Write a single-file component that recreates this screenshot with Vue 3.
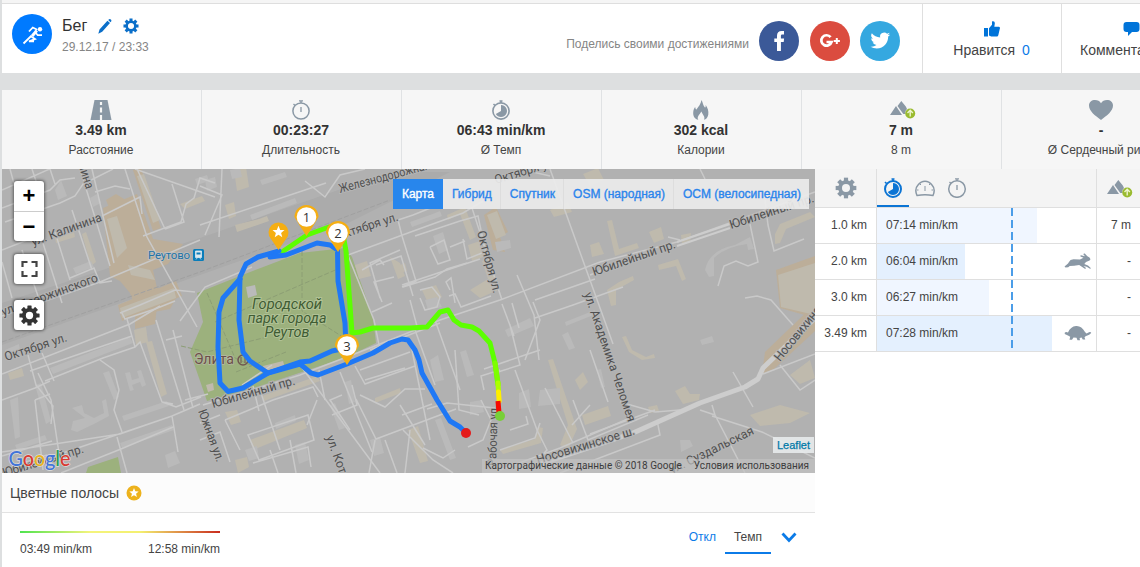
<template>
  <div class="page">
    <header class="top">
      <div class="sport">
        <svg viewBox="0 0 40 40" width="40" height="40">
          <circle cx="20" cy="20" r="20" fill="#007aff" />
          <circle cx="28" cy="15.200" r="2.200" fill="#fff" />
          <g fill="none" stroke="#fff" stroke-width="1.800">
            <path d="M17 17.500l3.800-4 4.500 2.200M23.500 18.500l2.200 2.700h4.300M11.500 29.500l8.200-8M18.800 22.300l4.200 2.700-6 2.300h5" />
            <path d="M24.800 16.500l-4.600 5.500" stroke-width="3" />
          </g>
        </svg>
      </div>
      <div class="title">
        <div class="name">
          <span>Бег</span>
          <svg class="pencil" viewBox="0 0 14 15" width="14" height="15" fill="#0b6fc9">
            <path d="M0.3 14.700l1.200-4.200 7.900-8.800 2.600 2.200-7.800 8.900zM10.200 1l.6-.6q1-.7 2.100.2.900 1 .2 2l-.6.6z" />
          </svg>
          <svg viewBox="-10 -10 20 20" width="16" height="16" fill="#0b6fc9">
            <g><rect v-for="a in gearAngles" :key="a" x="-1.9" y="-9.4" width="3.8" height="5" :transform="`rotate(${a})`" /></g>
            <circle r="5.4" fill="none" stroke="#0b6fc9" stroke-width="3.2" />
          </svg>
        </div>
        <div class="date">29.12.17 / 23:33</div>
      </div>
      <div class="share">
        <span>Поделись своими достижениями</span>
        <svg viewBox="0 0 40 40" width="40" height="40">
          <circle cx="20" cy="20" r="20" fill="#3b5998" />
          <path d="M18 30V21h-2.700v-3.600H18v-2.600c0-3.200 1.600-4.800 4.700-4.800H25v3.600h-1.600c-1.200 0-1.500.6-1.500 1.600v2.200h3.200l-.4 3.600h-2.800v9z" fill="#fff" />
        </svg>
        <svg class="gplus" viewBox="0 0 40 40" width="40" height="40">
          <circle cx="20" cy="20" r="20" fill="#db4c3f" />
          <path d="M20.600 16.200a5.200 5.200 0 1 0 .9 4.800h-5" fill="none" stroke="#fff" stroke-width="2.700" />
          <path d="M26.800 16.900v6.200M23.700 20h6.200" stroke="#fff" stroke-width="2" />
        </svg>
        <svg viewBox="0 0 40 40" width="40" height="40">
          <circle cx="20" cy="20" r="20" fill="#35a8e0" />
          <path transform="translate(10.5 9.7) scale(.82)" d="M23.95 4.57a10 10 0 0 1-2.82.77 4.96 4.96 0 0 0 2.16-2.72 9.9 9.9 0 0 1-3.12 1.19 4.92 4.92 0 0 0-8.38 4.48A13.93 13.93 0 0 1 1.64 3.16a4.92 4.92 0 0 0 1.52 6.57 4.9 4.9 0 0 1-2.22-.61v.06a4.92 4.92 0 0 0 3.94 4.83 5 5 0 0 1-2.21.08 4.94 4.94 0 0 0 4.6 3.42A9.87 9.87 0 0 1 0 19.54a13.99 13.99 0 0 0 7.55 2.21c9.05 0 14-7.5 14-13.99l-.02-.63a10 10 0 0 0 2.42-2.56z" fill="#fff" />
        </svg>
      </div>
      <div class="action like">
        <svg viewBox="0 0 16 16" width="16" height="16" fill="#0074d9">
          <path d="M0 7h4v8.5H0zM5 7.2l3-3.5V.6c1.8-.9 3 .4 2.8 2.2l-.5 3H15c1 .2 1.2 1.2.8 2l-1.5 6.5c-.3.9-.8 1.2-1.6 1.2H7.200L5 14.500z" />
        </svg>
        <div>Нравится <b>0</b></div>
      </div>
      <div class="action comment">
        <svg viewBox="0 0 17 16" width="17" height="16" fill="#0074d9">
          <path d="M3.500 1h10Q16.500 1 16.500 4v4q0 3-3 3H9l-4 4v-4H3.500Q.5 11 .5 8V4q0-3 3-3z" />
        </svg>
        <div>Комментарии</div>
      </div>
    </header>

    <section class="stats">
      <div v-for="s in stats" :key="s.label" class="stat">
        <svg v-if="s.icon === 'road'" class="icon" viewBox="0 0 22 20" width="22" height="20">
          <path d="M4.500 0h13L21.500 20H.5z" fill="#8a98a5" />
          <path d="M11 2v3M11 7.500v5M11 15v5" stroke="#f6f6f6" stroke-width="2.200" />
        </svg>
        <svg v-else-if="s.icon === 'clock'" class="icon" viewBox="0 0 20 20" width="20" height="20" fill="none" stroke="#8a98a5">
          <circle cx="10" cy="11" r="8.100" stroke-width="1.500" />
          <path d="M10 7v5M8 .9h4M10 1v2M2.500 4l1.500 1.500" stroke-width="1.300" />
        </svg>
        <svg v-else-if="s.icon === 'pace'" class="icon" viewBox="0 0 20 20" width="20" height="20">
          <circle cx="10" cy="11" r="8.100" fill="none" stroke="#8a98a5" stroke-width="1.600" />
          <path d="M10 11V5a6 6 0 1 1-5.200 9z" fill="#8a98a5" />
          <path d="M8.500 1h3M10 1v2M2.500 4l1.500 1.500" stroke="#8a98a5" stroke-width="1.500" />
        </svg>
        <svg v-else-if="s.icon === 'fire'" class="icon" viewBox="0 0 16 20" width="16" height="20">
          <path d="M8.500 0c1.500 3 1.400 5 3.400 7.500q1 .5.800-2.500c2 3 3.100 6 2.600 9.500-.5 3-2.300 5-4.300 5.300 1.500-3.300-1.500-5-2.500-8.300-2 3-5 5.500-3.200 8.300C2 19.200 0 16.500.2 12.800.3 10 1.200 8 2.200 7c.2 1.500.5 2.500 1.300 2.500C5.500 6.500 7.800 4 8.500 0z" fill="#8a98a5" />
        </svg>
        <svg v-else-if="s.icon === 'climb'" class="icon climb" viewBox="0 0 26 18" width="26" height="18">
          <path d="M0 14l6-9 6 9zM7.500 5l3.800-5 4.500 5.500L17 8q-2 1.500-1.700 5h-2z" fill="#8a98a5" />
          <circle cx="20.200" cy="12.500" r="5" fill="#9abb30" />
          <path d="M20.200 15.500v-6M17.500 12l2.700-2.700 2.700 2.700" fill="none" stroke="#eef5d0" stroke-width="1.400" />
        </svg>
        <svg v-else class="icon" viewBox="0 0 24 20" width="24" height="20">
          <path d="M12 20C6 15.500 0 11 0 5.500 0 2 2.800 0 6 0q4 0 6 3.300Q14 0 18 0c3.300 0 6 2 6 5.500C24 11 18 15.500 12 20z" fill="#8a98a5" />
        </svg>
        <strong>{{ s.value }}</strong>
        <span>{{ s.label }}</span>
      </div>
    </section>

    <main class="content">
      <div class="left">
        <div class="map">
          <svg class="tiles" viewBox="2 169 813 304" width="813" height="304">
            <rect x="2" y="169" width="813" height="304" fill="#b1b1b1" />
            <path d="M2 303L200 238 390 172h60L350 222 200 275 2 345z" fill="#ababab" />
            <g fill="#bcae99">
              <path v-for="d in sand" :key="d" :d="d" />
            </g>
            <path d="M197 293L245 274 300 253 345 248 352 257 373 318 376 343 347 357 260 386 207 401 190 352 203 322z" fill="#9cb17d" />
            <path d="M88 467l30-10 3 16H86z" fill="#9cb17d" />
            <g fill="#bfbaad">
              <path v-for="d in buildings" :key="d" :d="d" />
            </g>
            <g fill="#bababa">
              <path v-for="d in blocks" :key="d" :d="d" />
            </g>
            <g fill="none" stroke="#c9c9c9" stroke-width="1.500">
              <path v-for="d in roads" :key="d" :d="d" />
            </g>
            <g fill="none" stroke="#cdcdcd">
              <path d="M540 464L633 433 700 403 745 387 758 379 763 368 815 318" stroke-width="5" stroke-linejoin="round" />
              <path d="M677 246L730 228M677 242L730 224" stroke-width="2" />
            </g>
            <g fill="none" stroke="#999" stroke-width="1" stroke-dasharray="5 2">
              <path d="M2 342L200 272 390 200" stroke="#a0a0a0" />
              <path d="M207 293l28 65 35 16M302 251v60l55 35M215 322L340 268M236 372l50-20M181 346l26 6 60-15" stroke="#8c9e74" />
            </g>

            <g class="streets">
              <text v-for="l in labels" :key="l.t + l.x" :textLength="l.w" lengthAdjust="spacingAndGlyphs" :transform="`translate(${l.x} ${l.y}) rotate(${l.r})`">{{ l.t }}</text>
            </g>
            <g class="park" text-anchor="middle">
              <text x="287" y="309" textLength="70" lengthAdjust="spacingAndGlyphs">Городской</text>
              <text x="287" y="323" textLength="79" lengthAdjust="spacingAndGlyphs">парк города</text>
              <text x="287" y="337" textLength="45" lengthAdjust="spacingAndGlyphs">Реутов</text>
            </g>
            <text class="place" x="194" y="364" textLength="40" lengthAdjust="spacingAndGlyphs">Элита</text>
            <circle cx="243" cy="360" r="5" fill="none" stroke="#715850" stroke-width="1.500" />
            <path d="M241 357v6M245 357v6" stroke="#715850" />
            <text class="station" x="148" y="259" textLength="42">Реутово</text>
            <rect x="193" y="249" width="11" height="12" rx="1.500" fill="#0a7dba" />
            <path d="M195.500 251h6v6.500h-6zM196 259.500l1.500-2M201 259.500l-1.500-2" fill="#dbe8ef" stroke="#dbe8ef" stroke-width=".8" />
            <path d="M196.500 252.500h4v2h-4z" fill="#0a7dba" />

            <g fill="none" stroke-width="5" stroke-linejoin="round" stroke-linecap="round">
              <path d="M282 252L307 235 329 227 340 229 344 240 346 251 352 333 360 332 373 328 410 328 427 327 440 312 448 310 454 320 461 325 472 327 479 331 490 343 495 363 498 385" stroke="#5cff00" />
              <path d="M495 363L498 383" stroke="#7dff00" />
              <path d="M498 383l.5 8" stroke="#adff00" />
              <path d="M498.500 392l.7 9" stroke="#ffee00" />
              <path d="M498 401l1 12" stroke="#f50a00" stroke-linecap="butt" />
              <g stroke="#1f78f5">
                <path d="M279 251L258 257 246 264 240 277 239 320 243 352 250 361 268 373 300 364 311 373 318 375 347 364 373 353 390 343 402 339 408 340 415 350 419 360 422 373 437 400 450 421 460 427 466 433" />
                <path d="M240 279L223 298 219 312 218 347 220 383 228 391.500 243 388 268 373 300 362 310 361 332 351 346 348 345 323 338 281 337.500 250 330 245 317 243 286 255 270 257" />
              </g>
            </g>
            <circle cx="500" cy="416" r="5" fill="#78cf38" />
            <circle cx="466" cy="433" r="5" fill="#e41b1b" />

            <g v-for="p in pins" :key="p.n" :transform="`translate(${p.x} ${p.y})`">
              <path d="M0 19L-6 10-12 0A12 12 0 1 1 12 0L6 10z" fill="#f5ae12" />
              <circle r="9.800" fill="#fff" />
              <text class="num" y="4.500" text-anchor="middle">{{ p.n }}</text>
            </g>
            <g transform="translate(278.500 232)">
              <path d="M0 18L-7.500 7A10 10 0 1 1 7.500 7z" fill="#f5ae12" />
              <path :d="star" fill="#fff" />
            </g>

            <text class="google" x="8.500" y="466" textLength="62" lengthAdjust="spacingAndGlyphs"><tspan fill="#4274d8">G</tspan><tspan fill="#d93a31">o</tspan><tspan fill="#e9b31d">o</tspan><tspan fill="#4274d8">g</tspan><tspan fill="#2c9c52">l</tspan><tspan fill="#d93a31">e</tspan></text>
          </svg>

          <div class="controls">
            <div class="box zoom"><i>+</i><i>−</i></div>
            <div class="box">
              <svg viewBox="0 0 16 16" width="17" height="16" fill="none" stroke="#444" stroke-width="2.200">
                <path d="M1 6V1h5M10 1h5v5M15 10v5h-5M6 15H1v-5" />
              </svg>
            </div>
            <div class="box">
              <svg viewBox="-10 -10 20 20" width="21" height="21" fill="#333">
                <rect v-for="a in gearAngles" :key="a" x="-2" y="-9.600" width="4" height="5" rx=".6" :transform="`rotate(${a})`" />
                <circle r="5.300" fill="none" stroke="#333" stroke-width="3.600" />
              </svg>
            </div>
          </div>
          <div class="layers">
            <button v-for="(l, i) in layers" :key="l" type="button" :class="{ active: i === 0 }">{{ l }}</button>
          </div>
          <div class="leaflet">Leaflet</div>
          <div class="credits"><span>Картографические данные © 2018 Google</span><span>Условия использования</span></div>
        </div>

        <div class="stripes">
          <span>Цветные полосы</span>
          <svg viewBox="-8 -8 16 16" width="16" height="16">
            <circle r="7.500" fill="#edb21c" />
            <path :d="star" transform="scale(.78)" fill="#fff" />
          </svg>
        </div>
        <div class="legend">
          <div class="scale">
            <div class="gradient"></div>
            <div class="range"><span>03:49 min/km</span><span>12:58 min/km</span></div>
          </div>
          <div class="modes">
            <a>Откл</a>
            <a class="on">Темп</a>
            <svg viewBox="0 0 16 11" width="16" height="11" fill="none" stroke="#0b7be8" stroke-width="2.800">
              <path d="M1.500 1.500L8 8.500l6.500-7" />
            </svg>
          </div>
        </div>
      </div>

      <div class="splits">
        <div class="row head">
          <div class="km">
            <svg viewBox="-10 -10 20 20" width="22" height="22" fill="#8a98a5">
              <rect v-for="a in gearAngles" :key="a" x="-1.900" y="-9.400" width="3.800" height="5" :transform="`rotate(${a})`" />
              <circle r="5.400" fill="none" stroke="#8a98a5" stroke-width="3.500" />
            </svg>
          </div>
          <div class="tabs">
            <div class="tab on">
              <svg viewBox="0 0 20 20" width="20" height="20">
                <circle cx="10" cy="11" r="8" fill="none" stroke="#0b74d4" stroke-width="2" />
                <path d="M10 11V5a6 6 0 1 1-5.200 9z" fill="#0b74d4" />
                <path d="M8.500 1h3M10 1v2M2 4l1.500 1.500" stroke="#0b74d4" stroke-width="1.600" />
              </svg>
            </div>
            <div class="tab">
              <svg viewBox="0 0 20 20" width="20" height="20" fill="none" stroke="#8a98a5">
                <path d="M2 17.500Q-.8 11 3 7q3-3.700 7-3.700T17 7q3.800 4 1 10.500-8-1.500-16 0z" stroke-width="1.500" />
                <path d="M10 8v5M5 6l1 1M15 6l-1 1M2 12h1.500M16.500 12H18" />
              </svg>
            </div>
            <div class="tab">
              <svg viewBox="0 0 20 20" width="20" height="20" fill="none" stroke="#8a98a5">
                <circle cx="10" cy="11" r="8.300" stroke-width="1.500" />
                <path d="M10 7v5M8 .9h4M10 1v2M2.500 4l1.500 1.500" stroke-width="1.300" />
              </svg>
            </div>
          </div>
          <div class="climb-col">
            <svg viewBox="0 0 26 18" width="26" height="18">
              <path d="M0 14l6-9 6 9zM7.500 5l3.800-5 4.500 5.500L17 8q-2 1.500-1.700 5h-2z" fill="#8a98a5" />
              <circle cx="20.200" cy="12.500" r="5" fill="#9abb30" />
              <path d="M20.200 15.500v-6M17.500 12l2.700-2.700 2.700 2.700" fill="none" stroke="#eef5d0" stroke-width="1.400" />
            </svg>
          </div>
        </div>
        <div v-for="s in splits" :key="s.km" class="row">
          <div class="km">{{ s.km }}</div>
          <div class="pace">
            <div class="bar" :class="{ strong: s.animal }" :style="{ width: s.width + 'px' }">{{ s.pace }}</div>
            <span class="avg"></span>
            <svg v-if="s.animal === 'hare'" class="animal" viewBox="0 0 28 16" width="28" height="16" fill="#8a98a5">
              <path d="M.5 13.500L4 10.500l.8-1.300Q6 6.500 9.500 6.300l6.500.2 3.500-1.800-3-1.200q-.5-1 .5-1.200l4 .9-1.700-2q.4-1 1.500-.6l2.600 2.700 2.100 1.200 1 1.800-.9 1.300-3.600 1.400-1.700 2 3.700 1.500 3 2.700-1 .6-3.300-2-3.200-.8 2.500 2-.8 1-6-4-5 .8-4.500.2-1.500 1.200-2.700.3z" />
            </svg>
            <svg v-else-if="s.animal" class="animal" viewBox="0 0 28 16" width="28" height="16" fill="#8a98a5">
              <path d="M.7 9q-.5-2 1.500-2L4 7.500Q6.500 1.500 12 1t9 6l1.500 1.500 3-1.500q2 0 1.700 1l-2 1.800-3.700 1.500-1 1.200.8 2h-2.500l-1.200-2-2 .4.400 2.400H13.500l-1-2.500-3-.2-1.500 2.200H5.500l.7-3L4 10.500z" />
            </svg>
          </div>
          <div class="climb-col">{{ s.climb }}</div>
        </div>
      </div>
    </main>
  </div>
</template>

<script setup>
const gearAngles = [0, 45, 90, 135, 180, 225, 270, 315]
const star = 'M0-6.300L1.700-2.100 6-1.900 2.600.9 3.800 5.200 0 2.800-3.800 5.200-2.600.9-6-1.900-1.700-2.100z'

const stats = [
  { icon: 'road', value: '3.49 km', label: 'Расстояние' },
  { icon: 'clock', value: '00:23:27', label: 'Длительность' },
  { icon: 'pace', value: '06:43 min/km', label: 'Ø Темп' },
  { icon: 'fire', value: '302 kcal', label: 'Калории' },
  { icon: 'climb', value: '7 m', label: '8 m' },
  { icon: 'heart', value: '-', label: 'Ø Сердечный ритм' },
]

const layers = ['Карта', 'Гибрид', 'Спутник', 'OSM (народная)', 'OCM (велосипедная)']

const splits = [
  { km: '1.0 km', pace: '07:14 min/km', width: 160, climb: '7 m' },
  { km: '2.0 km', pace: '06:04 min/km', width: 88, climb: '-', animal: 'hare' },
  { km: '3.0 km', pace: '06:27 min/km', width: 112, climb: '-' },
  { km: '3.49 km', pace: '07:28 min/km', width: 175, climb: '-', animal: 'turtle' },
]

const pins = [
  { n: 1, x: 306.5, y: 217 },
  { n: 2, x: 338, y: 233 },
  { n: 3, x: 347, y: 346 },
]

const labels = [
  { t: 'Железнодорожная', x: 340, y: 193, r: -15, w: 94 },
  { t: 'Октября ул.', x: 496, y: 184, r: -17, w: 64 },
  { t: 'Октября ул.', x: 338, y: 240, r: -18, w: 64 },
  { t: 'ул. Калинина', x: 33, y: 246, r: -20, w: 74 },
  { t: 'ул. Дзержинского', x: 3, y: 316, r: -20, w: 102 },
  { t: 'Калинина', x: 70, y: 140, r: 72, w: 52 },
  { t: 'Октября ул.', x: 6, y: 361, r: -18, w: 65 },
  { t: 'Октября ул.', x: 477, y: 232, r: 75, w: 64 },
  { t: 'Юбилейный пр.', x: 594, y: 276, r: -19, w: 87 },
  { t: 'Юбилейный пр.', x: 731, y: 229, r: -18, w: 88 },
  { t: 'ул. Академика Челомея', x: 584, y: 294, r: 71, w: 136 },
  { t: 'Носовихинское ш.', x: 538, y: 464, r: -17, w: 102 },
  { t: 'Носовихинское ш.', x: 780, y: 362, r: -51, w: 100 },
  { t: 'ул. Суздальская', x: 672, y: 474, r: -26, w: 92 },
  { t: 'Рабочая ул', x: 496, y: 466, r: -88, w: 58 },
  { t: 'ул. Котовского', x: 326, y: 437, r: 70, w: 86 },
  { t: 'Южная ул.', x: 198, y: 411, r: 70, w: 55 },
  { t: 'Юбилейный пр.', x: 213, y: 408, r: -16, w: 86 },
  { t: 'Юбилейный пр.', x: 4, y: 477, r: -17, w: 84 },
]

const roads = [
  'M2 208L50 190 60 180 75 178M2 190L70 160M10 169l6 22M32 169l6 18M50 169l5 15',
  'M2 250L40 235M5 222l55-19 15-7 8-12 30-15M72 210l20 60M55 232l15 48M80 169l30 97M92 169l22 94M95 192l20-6 15 3',
  'M102 216L140 197 142 214M125 169l22 68 50 90M137 169l28 60M135 169l80 28M165 229l19-7-12-38M143 236l38-14 5-18 8-6 6-20 15 5',
  'M2 316L100 282 200 240M70 278l24-10 6 15 12-2M42 240l20 63M2 262l10 36M22 250l16 46',
  'M120 313l20-8 35-15 20 2M122 313l3 6 30-10 20-8M180 321l25-34 47-20',
  'M200 186L222 195 205 235M222 169l-3 68M305 181l20 16 15-22 25-6M200 225l60-20 66-22',
  'M2 374L130 324 160 306M30 371L132 336M2 400l33-12 15-7M28 355l8 30 17 21-2 18M42 353l12 28M38 373l13 27 9 60M35 400l15-6',
  'M45 381l58-23 32-11 5-5 22 60 14 5 25-10M135 347l-8-28M156 320l28 90M173 330l20 78M166 340l16-4M185 400l23-6M162 402l11 2',
  'M100 360l14 10 5 20-5 20 8 22M2 452L120 434 172 416 200 404M35 400l8 70M60 454l112-38 6 36M117 437l10 36M61 473l60-24 52-22M2 456l50-15M2 470l45-15',
  'M203 405L300 375 370 348 440 320 500 300 600 262 677 242 815 192',
  'M345 248L374 320 380 350M348 255l60-22 55-20 20-12M400 250l-30 13 10 35M362 270l18-10 4 5M376 265l25-9 12 40M372 312l20-9M382 302l-8-20 20-5',
  'M402 236l14 45-14 6M415 236l45-15 18-5 8 38M402 236l-4-16 15-5 25-10M430 247l14-7 6 20-12 4-8-17M450 247l15-6M463 239l4 20 15-6M467 263l-20 6-12 8-32 10',
  'M402 285L480 259M449 296l6-2 6 13 30-11M410 300l8 30M450 290l-4-8 5-4 4 25M420 290l12-3 8 10-3 10-12 3-5-12',
  'M550 169l45 125 18 50M590 275l60-23M472 208l30 92M517 275l17 40 5 45M410 340l20 100M525 360l15-40-7-18',
  'M484 369l41-14 15-5M500 370l-19 6 3 14M515 370l22 60 10 20-5 5M495 408l-48-5-20 6M535 318l38-13 50-18M573 400l15 40 60-25M590 434l65-24',
  'M300 365L380 473M317 400l-10 25M253 386l6 25M225 420l48-20 40-13 5 10M220 415l-20 8M240 450l-15-30M272 365l-30 20',
  'M248 435l60-20 6 25-55 20zM200 440l20-8 10 30M253 463l55-16 3 20M290 440l6 33M270 450l8 23M325 400l-6-30M332 415l25-10-5-20M356 399l20 40 80-30M360 395l25 12 20-18 20 0',
  'M370 350l70-27M360 370l50-18M365 380l40-12M375 440l-6 33M385 440l12 33M402 415l30-11M403 430l30 30 20 13M400 405l25 40M410 430l-5 43',
  'M455 450l-12 8-20-10M468 447l15-7 8-20-10-20M455 350l4 60 20 5M510 430l18-6-2-8M500 450l35-12 5-15',
  'M500 470l60-22 70-30M560 473l100-38-3-15M590 405l-18 20M620 402l35 10 25-2M733 372l20 35M763 374l52-20M780 365l20 25 15-10',
  'M700 410l15 5-3-10M712 416l50 16 53 26M715 415l30 58M765 200l3 25 6 26 30-12M750 224l8 38-10 4-12-5-12 5-6 20M745 298l12-2 14 4 22 25M680 240l-12-3M700 169l5 10',
  'M240 400l20-10 20 60M340 372l12 30 20 50M355 366l10 18 50-18M350 430l-20-30 12-5M545 388l28 55M520 169l30 7',
  'M415 330l20 55M435 320l25 70M510 325l10 40-22 7M502 304l12 32M512 303l7 25M535 300l60-21M590 350l18 52',
]

const sand = [
  'M103 208l34-14 16 45 30 5-15 20-15 6 4 18 23 3-10 18-32 6-8-22-10-12-10-5z',
  'M133 170l8-2 20 60-8 3z',
  'M118 305l58-24 6 15-60 25z',
  'M135 312l22-6-2 18-20 5z',
  'M484 215l12-8 12 25-8 5 5 15-12-2z',
  'M765 352l50-48v27l-41 38-12 5z',
  'M776 270l39-14v62l-35-10z',
  'M106 200l10-6 8 5 6 6-20 5z',
]

const buildings = [
  'M107 219l10-3 10 32-10 10-5-20z',
  'M137 176l7-2 16 46-7 3z',
  'M120 308l54-20 2 10-54 20z',
  'M134 330l12-3 2 15-12 3z',
  'M146 342l6-1 15 53-6 3z',
  'M128 265l22 5 5 10-24-5z',
  'M180 204l22-8 3 5-20 8zM55 238l19-6 1 5-19 6zM86 232l10 30-5 4-9-32z',
  'M8 373l14-5 2 8-14 4z',
  'M234 170l12-3 3 20-12 4zM235 225l24-6 8-3 2 5-32 11zM225 205l9-3 2 14-7 3z',
  'M355 265l12-4 4 15-12 3zM390 257l10 6 5 13-7 3z',
  'M447 215l18-8 11 30-6 3-10-26-12 6zM487 215l10-4 9 24-10 4zM468 245l12-4 6 15-14 5z',
  'M422 290l14-5 6 12-14 6zM470 290l18-11-6-18 7-2 11 30-20 9zM400 265l5-2 2 8-7 2z',
  'M583 174l15-6 6 12-14 6zM590 245l9-3 5 12-12 3zM550 210l18-8 4 10-18 5z',
  'M607 221l5-1 7 29 18-6 2 5-24 8zM649 232l12-5 3 12-10 4zM658 265l20-6 8 20-4 2-6-15-17 4z',
  'M607 290l12-8 14-6 1 4-18 10 0 15-5 1z',
  'M775 234l5-10 30-12 5 5-29 12-6 14-5 1z',
  'M778 275l37-12v52l-34-8z',
  'M690 243l-8 0-1-8 10-2z',
  'M560 445l8-20-20-65 5-1 24 70-9 20zM575 380l8-8 5 10-8 8z',
  'M582 415l26-9 3 10-26 9zM675 391l10-5 5 8 10 0-1 6-16 4zM648 407l9-2 2 6-9 2z',
  'M622 337l4-1 6 14 14 7 8-3 1 4-13 2-13-8z',
  'M250 440l54-20 3 8-54 22zM262 396l55-20 3 5-56 20zM235 460l12-3 2 10-11 6z',
  'M263 366l20-5 2 7-20 7zM206 385l7-2 1 7-6 2zM375 398l25-10 1 5-26 10zM225 412l12-2 4 12-10 3zM408 430l10-4 10 35-8 2z',
  'M750 415l30-10 30 8-20 10-30 3zM790 375l20-15 5 18-15 6zM500 450l35-11 3-12 5 1-2 15-38 11z',
]

const blocks = [
  'M20 190l14-4 2 8-14 4zM55 190l6-10 6 16-9 4zM90 198l7-4 4 9-8 4zM195 179l12-4 2 6-12 4zM73 268l18-7 3 6-18 7z',
  'M5 350l14-6 1 7-14 5zM50 368l80-31 3 6-80 31zM35 385l6-2 10 38-5 3zM10 400l8-3 2 40-5 2zM122 416l45-15 2 5-45 15z',
  'M103 373l6-2 10 26-5 3zM125 373l5-1 2 8 7-2-2-7 4-1 5 15-4 2-2-5-8 3 2 5-4 1zM72 408l10-3 2 8 10 5 10-5-2-12 4-2 3 17-15 8-17 8-6-2 2-9 12-3z',
  'M165 455l10-4 5 12-12 5zM120 443l52-18 2 5-52 18zM15 445l30-10 2 5-30 10z',
  'M410 222l20-7 10-4 2 5-30 11zM433 236l10-4 5 18-9 4zM495 242l15-2 1 8-14 4zM425 300l12-3 5 10-14 3z',
  'M705 270q4-20 30-25l15-8 4 12-6 1-1-6q-22 3-33 14l0 18-5 1z',
  'M430 360l8-5 6 25-9 2zM460 352l6-2 8 25-7 2zM470 402l12-2 2 12-14 3zM519 393l10-4 2 18-12 2zM540 390l20-2v16l-22 2z',
  'M230 170l10-2 2 9-10 2zM205 180l10-3 2 10-10 4zM260 180l25-8 2 5-25 8zM250 215l45-17 2 5-45 17z',
  'M345 382l6-2 4 22-6 2zM330 405l5-2 10 25-6 2zM275 423l20-8 1 6-20 8zM295 445l10-3 4 18-10 4zM245 450l12-4 2 12-10 3z',
  'M370 440l10-3 4 16-10 3zM435 420l6-2 15 40-6 2zM597 370l4-1 4 18-4 1zM562 335l6-3 7 16-6 2zM565 322l30-12 1 4-30 12z',
  'M505 330l25-12 4 8-26 11zM680 440l10 0 3 6-12 6zM700 340l12-4 2 6-12 3zM246 287l9-2 2 10-9 3z',
]
</script>

<style>
body {
  margin: 0;
  overflow: hidden;
}
</style>

<style scoped>
.page {
  box-sizing: border-box;
  width: 1140px;
  height: 567px;
  overflow: hidden;
  padding-left: 2px;
  background: #dddfe0;
  font-family: "Liberation Sans", Arial, sans-serif;
  font-size: 12px;
  color: #444;
}

svg {
  display: block;
  flex: none;
}

.top {
  display: flex;
  box-sizing: border-box;
  height: 73px;
  border-top: 3px solid #f5f5f5;
  background: #fff;
  box-shadow: inset 0 1px #dedede;
}

.sport {
  padding: 11px 10px 0 10px;
}

.title {
  flex: 1;
  padding-top: 13px;
}

.name {
  display: flex;
  align-items: center;
  height: 20px;
  font-size: 16px;
  color: #333;
}

.pencil {
  margin: 0 11px 0 11px;
}

.date {
  margin-top: 1px;
  line-height: 20px;
  color: #858585;
}

.share {
  display: flex;
  align-items: center;
  gap: 10px;
  height: 76px;
  padding-right: 22px;
  color: #858585;
}

.share span {
  padding-top: 5px;
}

.gplus {
  margin-left: 1px;
}

.action {
  box-sizing: border-box;
  width: 139px;
  margin-top: 1px;
  padding: 17px 1px 0 0;
  border-left: 1px solid #dfdfdf;
  font-size: 14px;
  line-height: 20px;
  text-align: center;
  white-space: nowrap;
}

.action svg {
  margin: 0 auto 3px;
}

.action b {
  margin-left: 3px;
  font-weight: normal;
  color: #0b7be8;
}

.action.comment {
  width: 79px;
  padding-left: 18px;
  text-align: left;
}

.comment svg {
  margin-left: 43px;
}

.stats {
  display: flex;
  width: 1200px;
  height: 79px;
  margin-top: 17px;
  background: #f6f6f6;
}

.stat {
  display: flex;
  flex-direction: column;
  align-items: center;
  box-sizing: border-box;
  width: 200px;
  padding: 10px 1px 0 0;
  border-right: 1px solid #e0e2e4;
}

.stat strong {
  font-size: 14px;
  line-height: 20px;
  color: #333;
}

.stat span {
  line-height: 21px;
}

.icon.climb {
  margin: 1px 0 1px 3px;
}

.content {
  display: flex;
  height: 398px;
  background: #fff;
}

.left {
  width: 813px;
}

.map {
  position: relative;
  height: 304px;
  overflow: hidden;
}

.streets {
  font: 12.5px Roboto, sans-serif;
  fill: #505050;
  stroke: #b5b5b5;
  stroke-width: 2px;
  paint-order: stroke;
}

.park {
  font: italic 14px Roboto, sans-serif;
  fill: #3f5c33;
  stroke: #b0c296;
  stroke-width: 2px;
  paint-order: stroke;
}

.place {
  font: 14px Roboto, sans-serif;
  fill: #6c5048;
  stroke: #b4b8a4;
  stroke-width: 1.5px;
  paint-order: stroke;
}

.station {
  font: 11.5px Roboto, sans-serif;
  fill: #2273a6;
  stroke: #c0c0c0;
  stroke-width: 1.5px;
  paint-order: stroke;
}

.num {
  font: 13px "Open Sans", sans-serif;
  fill: #333;
}

.google {
  font: 500 22px Lato, sans-serif;
  stroke: #ddd;
  stroke-width: 1.5px;
  paint-order: stroke;
}

.controls {
  position: absolute;
  top: 12px;
  left: 12px;
  display: flex;
  flex-direction: column;
  gap: 16px;
}

.box {
  display: flex;
  flex-direction: column;
  align-items: center;
  justify-content: center;
  width: 30px;
  height: 30px;
  border-radius: 3px;
  background: #fff;
  box-shadow: 0 0 3px 1px rgba(0, 0, 0, 0.45);
}

.zoom {
  height: 60px;
  margin-bottom: -3px;
}

.zoom i {
  box-sizing: border-box;
  width: 30px;
  height: 30px;
  font: bold 22px/29px "Liberation Sans", sans-serif;
  text-align: center;
  color: #000;
}

.zoom i + i {
  border-top: 1px solid #ccc;
}

.layers {
  position: absolute;
  top: 10px;
  right: 6px;
  display: flex;
}

.layers button {
  height: 30px;
  padding: 0 8px 0 9px;
  border: 0;
  border-right: 1px solid #ddd;
  background: rgba(235, 235, 235, 0.92);
  font: 12px "Liberation Sans", sans-serif;
  color: #2a84ec;
  -webkit-text-stroke: 0.35px;
}

.layers .active {
  border-right-color: #2886ec;
  background: #2886ec;
  color: #fff;
}

.layers button:last-child {
  border-right: 0;
}

.leaflet {
  position: absolute;
  right: 1px;
  bottom: 20px;
  padding: 0 4px;
  background: rgba(232, 235, 236, 0.9);
  font-size: 11px;
  line-height: 16px;
  color: #0078a8;
  -webkit-text-stroke: 0.25px;
}

.credits {
  position: absolute;
  right: 0;
  bottom: 0;
  display: flex;
  gap: 12px;
  padding: 0 6px 0 3px;
  background: rgba(195, 195, 195, 0.65);
  font: 10px/14px Roboto, sans-serif;
  letter-spacing: 0.02px;
  color: #3c3c3c;
}

.stripes {
  display: flex;
  align-items: center;
  gap: 7px;
  box-sizing: border-box;
  height: 40px;
  padding-left: 8px;
  border-bottom: 1px solid #e2e2e2;
  background: #fcfcfc;
  font-size: 14px;
}

.legend {
  display: flex;
  justify-content: space-between;
  padding: 12px 18px 0;
}

.scale {
  width: 200px;
  padding-top: 6px;
}

.gradient {
  height: 2px;
  background: linear-gradient(90deg, #4fe34f, #f4f47c 35%, #f4f070 60%, #c92b1e);
}

.range {
  display: flex;
  justify-content: space-between;
  line-height: 32px;
}

.modes {
  display: flex;
  align-items: flex-start;
}

.modes a {
  box-sizing: border-box;
  height: 29px;
  padding: 0 9px;
  line-height: 24px;
  color: #0b7be8;
}

.modes .on {
  border-bottom: 2px solid #0b7be8;
  color: #444;
}

.modes svg {
  margin: 7px 0 0 10px;
}

.splits {
  width: 325px;
}

.row {
  display: flex;
  box-sizing: border-box;
  height: 36px;
  border-bottom: 1px solid #dfdfdf;
  line-height: 34px;
}

.km {
  box-sizing: border-box;
  width: 62px;
  padding-right: 9px;
  border-right: 1px solid #dfdfdf;
  text-align: right;
}

.pace {
  position: relative;
  box-sizing: border-box;
  width: 220px;
  border-right: 1px solid #dfdfdf;
}

.bar {
  box-sizing: border-box;
  height: 35px;
  padding-left: 9px;
  background: #f0f6ff;
}

.bar.strong {
  background: #e4f0fe;
}

.avg {
  position: absolute;
  top: 0;
  left: 134px;
  width: 2px;
  height: 35px;
  background: repeating-linear-gradient(#4b9de8 0 8px, transparent 8px 12px);
}

.animal {
  position: absolute;
  top: 9px;
  right: 4px;
}

.climb-col {
  width: 34px;
  text-align: right;
}

.head {
  height: 39px;
  background: #f4f4f4;
}

.head .km {
  padding: 8px 0 0 20px;
}

.tabs {
  display: flex;
  box-sizing: border-box;
  width: 220px;
  border-right: 1px solid #dfdfdf;
}

.tab {
  box-sizing: border-box;
  width: 32px;
  height: 38px;
  padding: 9px 0 0 6px;
}

.tab.on {
  border-bottom: 2px solid #0b74d4;
}

.head .climb-col {
  padding: 11px 0 0 10px;
  width: 26px;
}
</style>
